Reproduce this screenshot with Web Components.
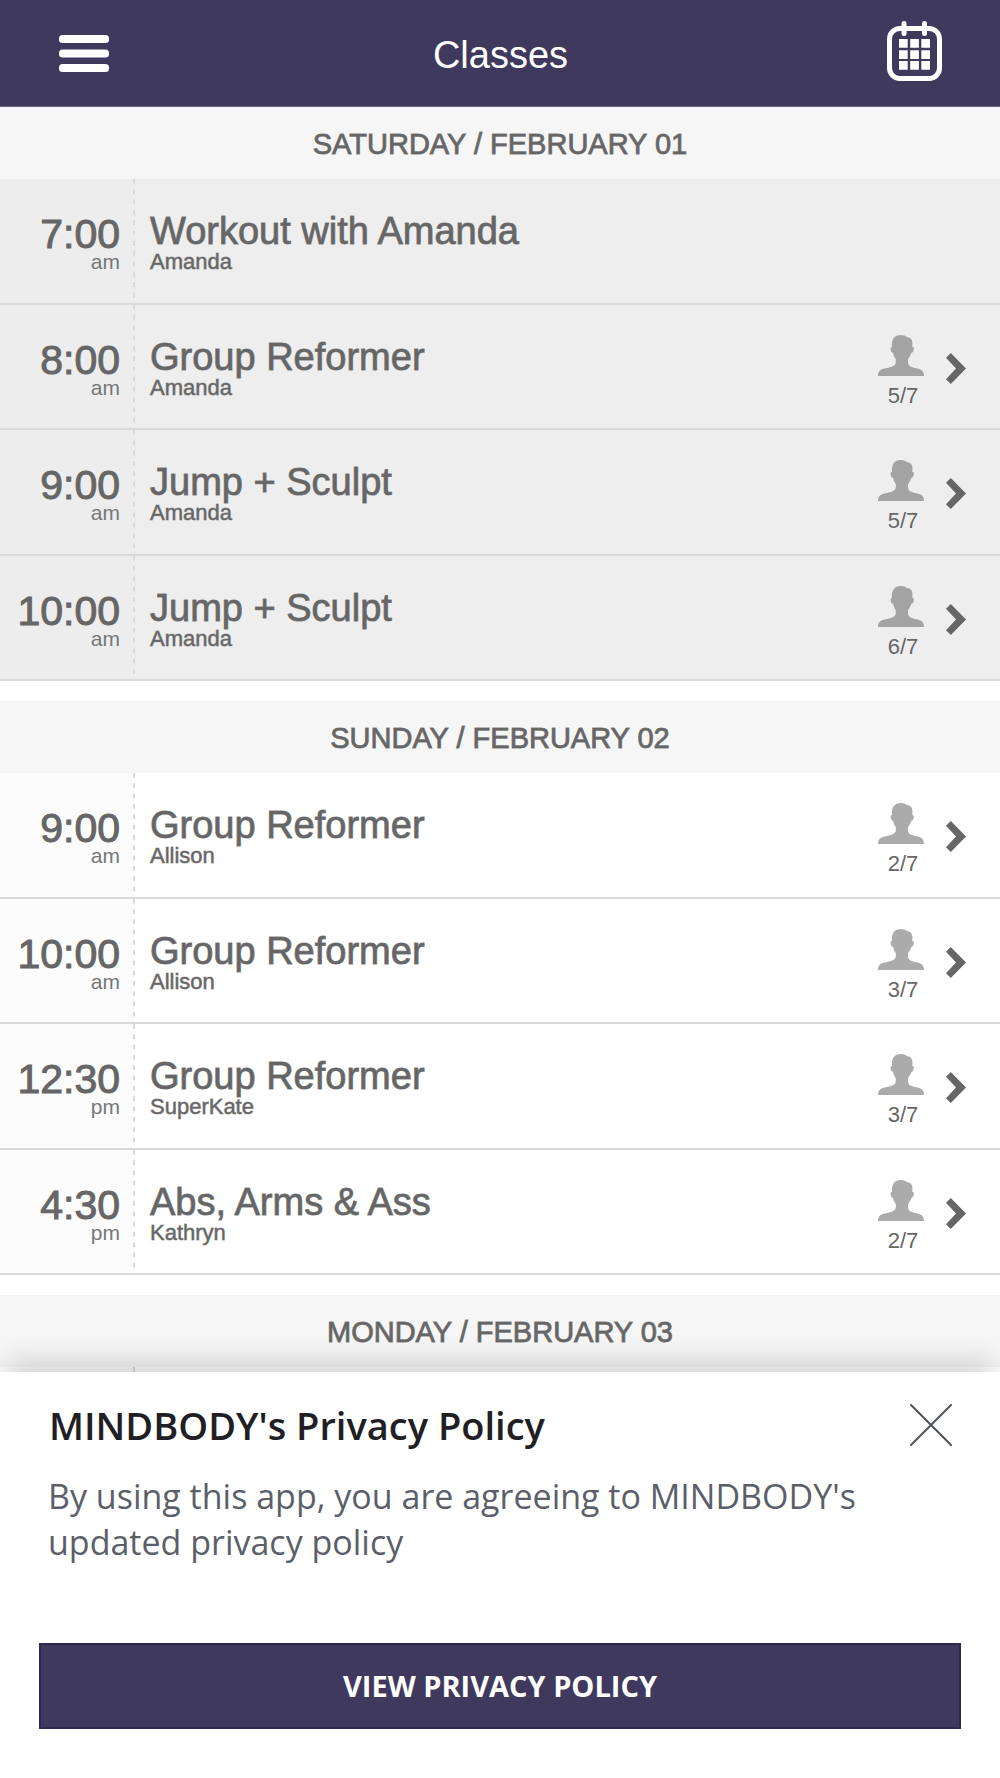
<!DOCTYPE html>
<html lang="en">
<head>
<meta charset="utf-8">
<meta name="viewport" content="width=device-width, initial-scale=1">
<title>Classes</title>
<style>
  body {
    margin: 0;
    background: #fff;
    color: #666;
    font-family: "Liberation Sans", Arial, sans-serif;
    --brand: #3f395e;
    --medium: 1px rgba(102, 102, 102, .8);
  }
</style>
</head>
<body>
<class-app>
  <app-bar slot="bar">Classes</app-bar>

  <day-section past>
    <span slot="day">SATURDAY / FEBRUARY 01</span>
    <class-row><span slot="time">7:00</span><span slot="half">am</span><span slot="name">Workout with Amanda</span><span slot="teacher">Amanda</span></class-row>
    <class-row open><span slot="time">8:00</span><span slot="half">am</span><span slot="name">Group Reformer</span><span slot="teacher">Amanda</span><span slot="count">5/7</span></class-row>
    <class-row open><span slot="time">9:00</span><span slot="half">am</span><span slot="name">Jump + Sculpt</span><span slot="teacher">Amanda</span><span slot="count">5/7</span></class-row>
    <class-row open><span slot="time">10:00</span><span slot="half">am</span><span slot="name">Jump + Sculpt</span><span slot="teacher">Amanda</span><span slot="count">6/7</span></class-row>
  </day-section>

  <day-section>
    <span slot="day">SUNDAY / FEBRUARY 02</span>
    <class-row open><span slot="time">9:00</span><span slot="half">am</span><span slot="name">Group Reformer</span><span slot="teacher">Allison</span><span slot="count">2/7</span></class-row>
    <class-row open><span slot="time">10:00</span><span slot="half">am</span><span slot="name">Group Reformer</span><span slot="teacher">Allison</span><span slot="count">3/7</span></class-row>
    <class-row open><span slot="time">12:30</span><span slot="half">pm</span><span slot="name">Group Reformer</span><span slot="teacher">SuperKate</span><span slot="count">3/7</span></class-row>
    <class-row open><span slot="time">4:30</span><span slot="half">pm</span><span slot="name">Abs, Arms &amp; Ass</span><span slot="teacher">Kathryn</span><span slot="count">2/7</span></class-row>
  </day-section>

  <day-section>
    <span slot="day">MONDAY / FEBRUARY 03</span>
    <class-row></class-row>
  </day-section>

  <policy-sheet slot="sheet">
    <span slot="title">MINDBODY's Privacy Policy</span>
    By using this app, you are agreeing to MINDBODY's updated privacy policy
    <span slot="action">VIEW PRIVACY POLICY</span>
  </policy-sheet>
</class-app>

<template id="class-app">
  <style>
    :host { display: flex; flex-direction: column; height: 100vh; }
    main { flex: 1; min-height: 0; overflow: hidden; display: flex; flex-direction: column; gap: 20px; }
  </style>
  <slot name="bar"></slot>
  <main><slot></slot></main>
  <slot name="sheet"></slot>
</template>

<template id="app-bar">
  <style>
    :host { display: block; background: var(--brand); color: #fff; border-bottom: 1px solid #6b6680; }
    header { display: grid; grid-template-columns: 1fr auto 1fr; align-items: center; height: 106px; padding: 0 58px 0 59px; }
    h1 { margin: 0; font-size: 38px; line-height: 44px; font-weight: 400; padding-top: 4px; }
    button { border: 0; padding: 0; background: none; color: inherit; display: block; cursor: pointer; }
    button:last-child { justify-self: end; padding-bottom: 4px; }
    svg { display: block; fill: currentColor; }
  </style>
  <header>
    <button type="button" aria-label="Menu">
      <svg width="50" height="37" viewBox="0 0 50 37"><rect width="50" height="8" rx="3.5"/><rect y="14.5" width="50" height="8" rx="3.5"/><rect y="29" width="50" height="8" rx="3.5"/></svg>
    </button>
    <h1><slot></slot></h1>
    <button type="button" aria-label="Calendar">
      <svg width="55" height="60" viewBox="0 0 55 60">
        <rect x="2.5" y="7.5" width="50" height="50" rx="10.5" fill="none" stroke="currentColor" stroke-width="5"/>
        <rect x="14.5" y="0" width="5" height="15" rx="2.5"/><rect x="35" y="0" width="5" height="15" rx="2.5"/>
        <path d="M12 18h8.700v8.700H12zM23.200 18h8.700v8.700h-8.700zM34.300 18H43v8.700h-8.700zM12 29.200h8.700v8.700H12zM23.200 29.200h8.700v8.700h-8.700zM34.300 29.200H43v8.700h-8.700zM12 40.100h8.700v8.700H12zM23.200 40.100h8.700v8.700h-8.700zM34.300 40.100H43v8.700h-8.700z"/>
      </svg>
    </button>
  </header>
</template>

<template id="day-section">
  <style>
    :host { display: block; --row: #fff; --aside: #fcfcfc; --person: #ababab; }
    :host([past]) { --row: #eee; --aside: #ededed; --person: #a3a3a3; }
    h2 { margin: 0; background: #f6f6f6; text-align: center; font-size: 29px; line-height: 70px; padding-top: 2px; font-weight: 400; -webkit-text-stroke: var(--medium); }
    ::slotted(class-row) { height: 126px; }
    ::slotted(class-row:nth-of-type(even)) { height: 125px; }
  </style>
  <section><h2><slot name="day"></slot></h2><slot></slot></section>
</template>

<template id="class-row">
  <style>
    :host { display: block; box-sizing: border-box; background: var(--row); border-bottom: 2px solid #d9d9d9; }
    .row { display: flex; height: 100%; color: inherit; text-decoration: none; }
    .when {
      flex: none; width: 135px; box-sizing: border-box; padding: 35px 15px 0 0; text-align: right;
      background: linear-gradient(#d9d9d9 0 5px, transparent 5px) right top / 2px 10px repeat round, var(--aside);
      background-repeat: no-repeat round, repeat;
    }
    .time { font-size: 41px; line-height: 40px; -webkit-text-stroke: 1px #666; }
    .half { font-size: 21px; line-height: 16px; color: #777; }
    .what { flex: 1; min-width: 0; padding: 32px 0 0 15px; }
    .name { font-size: 38px; line-height: 40px; -webkit-text-stroke: var(--medium); }
    .teacher { font-size: 22px; line-height: 22px; -webkit-text-stroke: 1px rgba(102, 102, 102, .5); }
    .spots { flex: none; display: none; width: 50px; flex-direction: column; align-items: center; gap: 9px; padding-top: 30px; margin-right: 20px; font-size: 22px; line-height: 22px; }
    .count { padding-left: 4px; }
    .go { flex: none; display: none; margin: 48px 34px 0 0; }
    :host([open]) .spots { display: flex; }
    :host([open]) .go { display: block; }
    .person { fill: var(--person); }
    .go { fill: #666; }
  </style>
  <a class="row">
    <div class="when"><div class="time"><slot name="time"></slot></div><div class="half"><slot name="half"></slot></div></div>
    <div class="what"><div class="name"><slot name="name"></slot></div><div class="teacher"><slot name="teacher"></slot></div></div>
    <div class="spots">
      <svg class="person" width="46" height="41" viewBox="0 0 46 41" aria-hidden="true"><path d="M23 0C25.500 0 27.500.8 29 2.200C32.500 2 34.300 4.600 34.500 8.200L34.300 12C35.800 11.800 36.200 13 35.700 14.800C35.300 16.600 34.600 17.700 33.500 17.800C32.700 20.300 31.200 22.500 30 24.200V27.200C30 31.200 34 32.300 38.500 33.200C44 34.300 46 36.500 46 41H0C0 36.500 2 34.300 7.500 33.200C12 32.300 17.800 31.200 17.800 27.200V24.200C16.500 22.500 15.500 20.300 15 17.800C13.800 17.700 13 16.600 12.700 14.800C12.300 13 12.700 11.800 14 12C13 4.500 16.500 0 23 0Z"/></svg>
      <div class="count"><slot name="count"></slot></div>
    </div>
    <svg class="go" width="20" height="31" viewBox="0 0 20 31" aria-hidden="true"><path d="M4.800 0L20 15.400L4.800 31L0 26.200L10 15.400L0 4.800Z"/></svg>
  </a>
</template>

<template id="policy-sheet">
  <style>
    :host {
      display: block; position: relative; background: #fff; color: #5b5f69; padding: 29px 39px 49px;
      font-family: "Open Sans", "Noto Sans", sans-serif; box-shadow: 0 -16px 26px -6px rgba(0, 0, 0, .17);
    }
    .top { display: flex; justify-content: space-between; align-items: center; padding: 0 9px 0 10px; }
    h2 { margin: 0; font-size: 38px; line-height: 48px; font-weight: 600; color: #202024; }
    p { margin: 24px 9px 78px; font-size: 34px; line-height: 46px; }
    button { font: inherit; cursor: pointer; }
    .close { border: 0; padding: 0; background: none; }
    .close svg { display: block; fill: none; stroke: #50535b; stroke-width: 2; stroke-linecap: round; }
    .view { display: block; width: 100%; height: 86px; border: 2px solid #2e2850; background: var(--brand); color: #fff; font-size: 29px; font-weight: 700; line-height: 40px; }
  </style>
  <section aria-label="Privacy policy">
    <div class="top">
      <h2><slot name="title"></slot></h2>
      <button class="close" type="button" aria-label="Close"><svg width="42" height="42" viewBox="0 0 42 42"><path d="M1 1L41 41M41 1L1 41"/></svg></button>
    </div>
    <p><slot></slot></p>
    <button class="view" type="button"><slot name="action"></slot></button>
  </section>
</template>

<script>
  class TemplateElement extends HTMLElement {
    constructor() {
      super();
      const template = document.getElementById(this.localName);
      this.attachShadow({ mode: "open" }).append(template.content.cloneNode(true));
    }
  }

  class ClassRow extends TemplateElement {
    connectedCallback() {
      if (this.hasAttribute("open")) this.shadowRoot.querySelector("a").href = "#class";
    }
  }

  customElements.define("class-app", class extends TemplateElement {});
  customElements.define("app-bar", class extends TemplateElement {});
  customElements.define("day-section", class extends TemplateElement {});
  customElements.define("class-row", ClassRow);
  customElements.define("policy-sheet", class extends TemplateElement {});
</script>
</body>
</html>
